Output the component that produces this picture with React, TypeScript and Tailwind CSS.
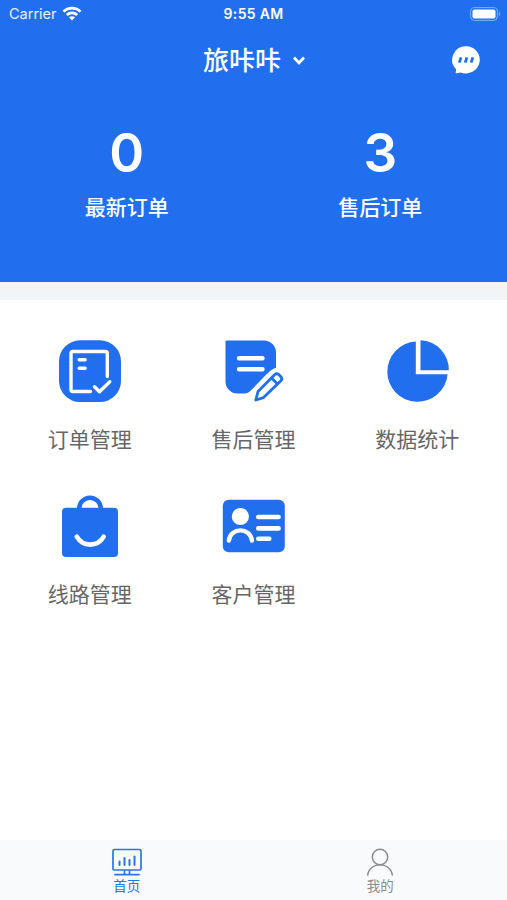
import { useState, type ReactNode } from 'react'

type TabKey = 'home' | 'mine'

const stats = [
  { value: 0, label: '最新订单' },
  { value: 3, label: '售后订单' },
]

const iconClass = 'block shrink-0 w-[72px] h-[72px]'

function OrderIcon() {
  return (
    <svg viewBox="0 0 72 72" className={iconClass} fill="none">
      <rect x="5" y="4.3" width="62" height="61.7" rx="21" fill="#216fee" />
      <g stroke="#fff" strokeWidth="3.4" strokeLinecap="round" strokeLinejoin="round">
        <path d="M36.5 55.5H19a2 2 0 0 1-2-2V17.5a2 2 0 0 1 2-2h32.3a2 2 0 0 1 2 2V40.5" />
        <path d="M25.2 23.8h6M25.2 32.3h6" />
        <path d="M40.5 50.8l5 5 10.3-10" />
      </g>
    </svg>
  )
}

function AfterSaleIcon() {
  return (
    <svg viewBox="-0.5 -0.3 72 72" className={iconClass} fill="none">
      <path
        d="M9 4.3H46.5a12 12 0 0 1 12 12V31.5C54 33 51.5 35.5 49 38L33 54.5C31 56.5 29.5 57.2 27 57.2H20A12 12 0 0 1 8 45.2V5.3a1 1 0 0 1 1-1Z"
        fill="#216fee"
      />
      <path d="M21.5 22h23.5M21.5 33h23.5" stroke="#fff" strokeWidth="4.4" strokeLinecap="round" />
      <g stroke="#216fee" strokeWidth="2.8" strokeLinejoin="round">
        <path d="M38.3 63.7l2.2-8.5L57.3 38.3a2.8 2.8 0 0 1 3.9 0l2.2 2.2a2.8 2.8 0 0 1 0 3.9L46 61.3Z" />
        <path d="M54 41.6l6 6" />
      </g>
    </svg>
  )
}

function ChartIcon() {
  return (
    <svg viewBox="-0.8 0 72 72" className={iconClass} fill="#216fee">
      <path d="M34 5.5V38.3H65.8A30.2 30.2 0 1 1 34 5.5Z" />
      <path d="M38.7 4.2A29.5 29.5 0 0 1 67 34.3H38.7Z" />
    </svg>
  )
}

function RouteIcon() {
  return (
    <svg viewBox="0 0 72 72" className={iconClass} fill="none">
      <rect x="8" y="16.7" width="56" height="49.2" rx="4" fill="#216fee" />
      <path d="M25.2 18v-.5a10.8 10.8 0 0 1 21.6 0v.5" stroke="#216fee" strokeWidth="4.4" />
      <path d="M22.8 45.7c6 10.5 20.900 10.5 26.900 0" stroke="#fff" strokeWidth="4.6" strokeLinecap="round" />
    </svg>
  )
}

function CustomerIcon() {
  return (
    <svg viewBox="-0.8 0 72 72" className={iconClass} fill="none">
      <rect x="5" y="8.8" width="62" height="52.5" rx="6" fill="#216fee" />
      <circle cx="22.6" cy="25.5" r="8.6" fill="#fff" />
      <g stroke="#fff" strokeLinecap="round">
        <path d="M11 49.7C12.5 36 32.7 36 34.2 49.7" strokeWidth="4.2" />
        <path d="M40.5 26h20.3M40.5 37.4h20.3M40.5 47.8h11" strokeWidth="4.6" />
      </g>
    </svg>
  )
}

const menus: { label: string; icon: ReactNode }[] = [
  { label: '订单管理', icon: <OrderIcon /> },
  { label: '售后管理', icon: <AfterSaleIcon /> },
  { label: '数据统计', icon: <ChartIcon /> },
  { label: '线路管理', icon: <RouteIcon /> },
  { label: '客户管理', icon: <CustomerIcon /> },
]

function HomeIcon() {
  return (
    <svg viewBox="0 0 32 30" className="shrink-0 w-8 h-[30px]" fill="none" stroke="currentColor" strokeWidth="1.7" strokeLinecap="round">
      <rect x="2" y="2.5" width="28" height="20.5" rx="1.5" />
      <path d="M8.5 18v-3.5M13.5 18v-7M18.5 18v-5M23.5 18V9.5" strokeWidth="2" />
      <path d="M13.5 23.5v4M18.5 23.5v4M4 27.7h24" />
    </svg>
  )
}

function MineIcon() {
  return (
    <svg viewBox="0 0 32 30" className="shrink-0 w-8 h-[30px]" fill="none" stroke="currentColor" strokeWidth="1.5" strokeLinecap="round">
      <circle cx="16" cy="10" r="7.7" />
      <path d="M3.7 28C5.7 14.2 26.3 14.2 28.3 28" />
    </svg>
  )
}

function StatusBar() {
  return (
    <div className="grid grid-cols-3 items-center h-[27px] pl-[9px] pr-[6px]">
      <div className="flex items-center gap-[5px] text-[14.5px] text-white/90">
        <span>Carrier</span>
        <svg viewBox="0 0 20 15" className="w-5 h-[15px]" fill="none" stroke="#fff" strokeWidth="2.7">
          <path d="M1.5 5.6C6.2 1 13.8 1 18.5 5.6" />
          <path d="M4.8 9C7.7 6.2 12.3 6.2 15.2 9" />
          <path d="M10 14.5L6.9 11.3C8.7 9.8 11.3 9.8 13.1 11.3Z" fill="#fff" stroke="none" />
        </svg>
      </div>
      <span className="pr-[3px] text-center text-[14px] font-semibold tracking-[0.3px] whitespace-nowrap">9:55 AM</span>
      <svg viewBox="0 0 31 14" className="justify-self-end w-[31px] h-[14px]" fill="none">
        <rect x="0.6" y="0.6" width="26.8" height="12.8" rx="4" stroke="#fff" strokeOpacity="0.45" />
        <rect x="2.5" y="2.5" width="23" height="9" rx="2" fill="#fff" />
        <path d="M29 4.8c1.6.7 1.6 3.7 0 4.4Z" fill="#fff" fillOpacity="0.5" />
      </svg>
    </div>
  )
}

export default function App() {
  const [activeTab, setActiveTab] = useState<TabKey>('home')

  return (
    <div className="flex flex-col w-full h-screen overflow-hidden bg-white font-['Inter','Noto_Sans_CJK_SC',sans-serif]">
      {/* Header */}
      <header className="h-[282px] shrink-0 bg-[#216fee] text-white">
        <StatusBar />
        <div className="grid grid-cols-[1fr_auto_1fr] items-center h-[66px] pr-[26px]">
          <button className="col-start-2 flex items-center gap-[12px] pl-[27px] pt-[2px] text-[26px] leading-none font-medium">
            <span>旅咔咔</span>
            <svg viewBox="0 0 12 10" className="w-3 h-[10px]" fill="none" stroke="#fff" strokeWidth="2.8">
              <path d="M1 1.5l5 5.5 5-5.5" />
            </svg>
          </button>
          <svg viewBox="0 0 30 30" className="justify-self-end w-[30px] h-[30px]" fill="#fff">
            <path d="M15 1.2A14 13.6 0 1 1 9.5 27.4L5.7 28.3a.8.8 0 0 1-1-.9L5.1 24.3A13.6 13.6 0 0 1 15 1.2Z" />
            <path d="M10 12.4l-1.7 5.2M15.9 12.4l-1.7 5.2M21.8 12.4l-1.7 5.2" stroke="#216fee" strokeWidth="2.8" />
          </svg>
        </div>
        <div className="grid grid-cols-2 pt-[32px]">
          {stats.map((s) => (
            <div key={s.label} className="flex flex-col items-center">
              <span className="text-[53px] leading-[56px] font-semibold">{s.value}</span>
              <span className="mt-[13px] text-[21px] leading-[28px] font-medium">{s.label}</span>
            </div>
          ))}
        </div>
      </header>
      <div className="h-[18px] shrink-0 bg-[#f3f4f6]" />

      {/* Menu grid */}
      <main className="flex-1 px-2">
        <div className="grid grid-cols-3 gap-y-[37px] pt-[36px]">
          {menus.map((m) => (
            <button key={m.label} className="flex flex-col items-center h-[118px]">
              {m.icon}
              <span className="mt-[18px] text-[21px] leading-[28px] text-[#666]">{m.label}</span>
            </button>
          ))}
        </div>
      </main>

      {/* Tab bar */}
      <nav className="grid grid-cols-2 h-[60px] shrink-0 bg-[#f9fafc]">
        {(
          [
            ['home', '首页', <HomeIcon />],
            ['mine', '我的', <MineIcon />],
          ] as [TabKey, string, ReactNode][]
        ).map(([key, label, icon]) => (
          <button
            key={key}
            onClick={() => setActiveTab(key)}
            className={`flex flex-col items-center pt-[7px] ${activeTab === key ? 'text-[#2b74e8]' : 'text-[#8a8a8a]'}`}
          >
            {icon}
            <span className="mt-px text-[13.5px] leading-[16px]">{label}</span>
          </button>
        ))}
      </nav>
    </div>
  )
}
